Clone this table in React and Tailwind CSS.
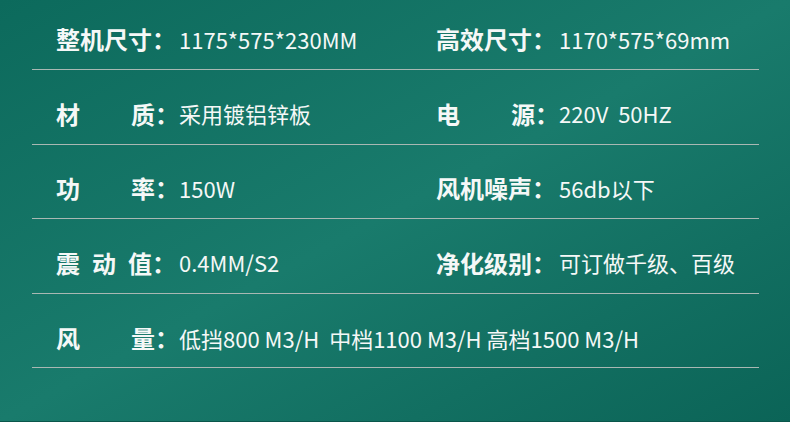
import React from 'react';

const rows = [
  [
    { label: ['整', '机', '尺', '寸'], value: '1175*575*230MM' },
    { label: ['高', '效', '尺', '寸'], value: '1170*575*69mm' },
  ],
  [
    { label: ['材', '质'], value: '采用镀铝锌板' },
    { label: ['电', '源'], value: '220V\u00a0 50HZ' },
  ],
  [
    { label: ['功', '率'], value: '150W' },
    { label: ['风', '机', '噪', '声'], value: '56db以下' },
  ],
  [
    { label: ['震', '动', '值'], value: '0.4MM/S2' },
    { label: ['净', '化', '级', '别'], value: '可订做千级、百级' },
  ],
];

const Spec = ({ label, value }) => (
  <div className="flex items-center h-[30px]">
    <div className="flex items-center w-[123px] shrink-0 font-bold text-[24px] -ml-[1px]">
      <span className={`flex justify-between ${label.length === 2 ? 'w-[100px]' : 'w-[96px]'}`}>
        {label.map((c, i) => (
          <span key={i}>{c}</span>
        ))}
      </span>
      <span>：</span>
    </div>
    <span className="text-[22px] whitespace-pre">{value}</span>
  </div>
);

export default function App() {
  return (
    <div
      className="w-[790px] h-[422px] overflow-hidden text-[#f5f8f7] bg-gradient-to-br from-[#0c6a5c] via-[#197b6c] to-[#0b6457] border-b border-[#0a564b]"
      style={{ fontFamily: '"Noto Sans CJK SC", "Noto Sans", sans-serif' }}
    >
      <div className="ml-[32px] w-[727px]">
        {rows.map((r, i) => (
          <div
            key={i}
            className={`grid grid-cols-[380px_1fr] items-end pl-[25px] pb-[15px] border-b border-[#a9b8b3] ${
              i === 0 ? 'h-[70px]' : 'h-[74.5px]'
            }`}
          >
            <Spec {...r[0]} />
            <Spec {...r[1]} />
          </div>
        ))}
        <div className="flex items-end pl-[25px] pb-[14px] h-[74.5px] border-b border-[#a9b8b3]">
          <Spec
            label={['风', '量']}
            value={'低挡800 M3/H\u00a0 中档1100 M3/H 高档1500 M3/H'}
          />
        </div>
      </div>
    </div>
  );
}
